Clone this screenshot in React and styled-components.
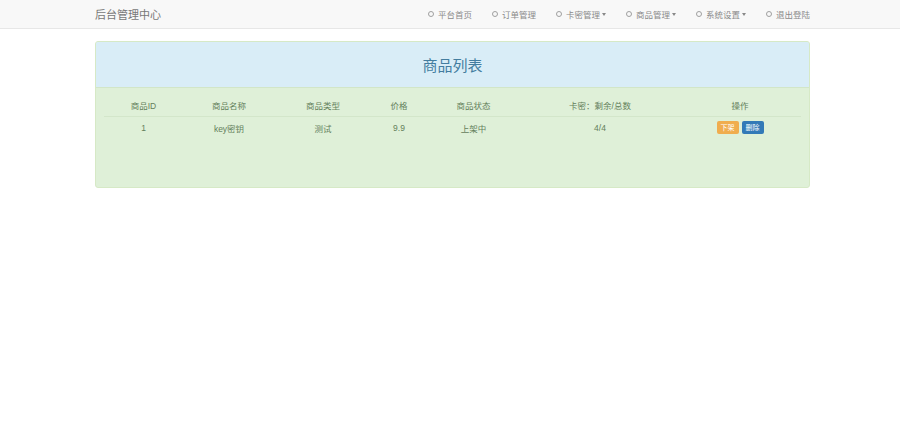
import React from 'react';
import styled, { createGlobalStyle } from 'styled-components';

const GlobalStyle = createGlobalStyle`
  html, body {
    margin: 0;
    padding: 0;
    background: #fff;
    font-family: "Liberation Sans", "Noto Sans CJK SC", sans-serif;
  }
`;

const Navbar = styled.div`
  height: 28px;
  background: #f8f8f8;
  border-bottom: 1px solid #e7e7e7;
  display: flex;
  align-items: center;
  justify-content: space-between;
  padding: 0 90px 0 95px;
`;

const Brand = styled.div`
  font-size: 11px;
  color: #777;
`;

const NavList = styled.div`
  display: flex;
  align-items: center;
`;

const NavItem = styled.div`
  display: flex;
  align-items: center;
  font-size: 8.5px;
  color: #8a8a8a;
  margin-left: ${props => props.first ? '0' : '20px'};
`;

const Dot = styled.span`
  width: 4px;
  height: 4px;
  border: 1px solid #a0a0a0;
  border-radius: 50%;
  margin-right: 4px;
`;

const Caret = styled.span`
  width: 0;
  height: 0;
  margin-left: 2px;
  border-left: 2px solid transparent;
  border-right: 2px solid transparent;
  border-top: 3px solid #888;
`;

const Panel = styled.div`
  margin: 12px 0 0 95px;
  width: 713px;
  border: 1px solid #d6e9c6;
  border-radius: 3px;
  background: #dff0d8;
  overflow: hidden;
`;

const PanelHeading = styled.div`
  height: 45px;
  background: #d9edf7;
  border-bottom: 1px solid #d2e6c8;
  display: flex;
  align-items: center;
  justify-content: center;
`;

const Title = styled.h3`
  margin: 0;
  font-size: 15px;
  font-weight: normal;
  color: #437d9f;
`;

const PanelBody = styled.div`
  padding: 6px 8px 0 8px;
  height: 93px;
`;

const Row = styled.div`
  display: grid;
  grid-template-columns: 79px 92px 96px 56px 93px 160px 120px;
  align-items: center;
  height: ${props => props.head ? '22px' : '21px'};
  border-bottom: ${props => props.head ? '1px solid #d3e6ca' : 'none'};
`;

const Cell = styled.div`
  font-size: 8.5px;
  color: #64805b;
  display: flex;
  justify-content: center;
  align-items: center;
  gap: 3px;
`;

const Btn = styled.span`
  display: inline-block;
  padding: 2px 4px;
  font-size: 7px;
  line-height: 9px;
  color: #fff;
  border-radius: 2px;
  background: ${props => props.variant === 'warning' ? '#f0ad4e' : '#337ab7'};
`;

const navItems = [
  { label: '平台首页' },
  { label: '订单管理' },
  { label: '卡密管理', dropdown: true },
  { label: '商品管理', dropdown: true },
  { label: '系统设置', dropdown: true },
  { label: '退出登陆' },
];

const headers = ['商品ID', '商品名称', '商品类型', '价格', '商品状态', '卡密：剩余/总数', '操作'];

const products = [
  { id: 1, name: 'key密钥', type: '测试', price: '9.9', status: '上架中', cards: '4/4' },
];

export default function App() {
  return (
    <>
      <GlobalStyle />
      <Navbar>
        <Brand>后台管理中心</Brand>
        <NavList>
          {navItems.map((item, i) => (
            <NavItem key={item.label} first={i === 0}>
              <Dot />
              {item.label}
              {item.dropdown && <Caret />}
            </NavItem>
          ))}
        </NavList>
      </Navbar>
      <Panel>
        <PanelHeading>
          <Title>商品列表</Title>
        </PanelHeading>
        <PanelBody>
          <Row head>
            {headers.map(h => <Cell key={h}>{h}</Cell>)}
          </Row>
          {products.map(p => (
            <Row key={p.id}>
              <Cell>{p.id}</Cell>
              <Cell>{p.name}</Cell>
              <Cell>{p.type}</Cell>
              <Cell>{p.price}</Cell>
              <Cell>{p.status}</Cell>
              <Cell>{p.cards}</Cell>
              <Cell>
                <Btn variant="warning">下架</Btn>
                <Btn>删除</Btn>
              </Cell>
            </Row>
          ))}
        </PanelBody>
      </Panel>
    </>
  );
}
